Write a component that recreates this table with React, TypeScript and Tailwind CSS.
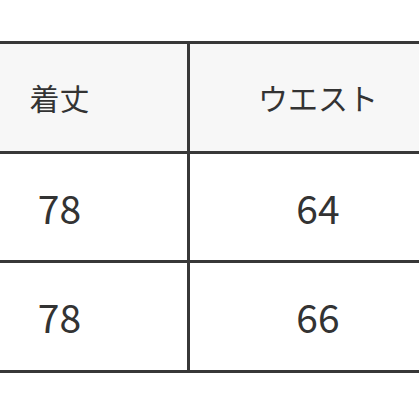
import React from "react";

const rows = [
  { length: "78", waist: "64" },
  { length: "78", waist: "66" },
];

const font = { fontFamily: '"Noto Sans CJK JP", "Noto Sans", sans-serif' };

export default function App() {
  return (
    <div className="w-[419px] h-[419px] overflow-hidden bg-white pt-[41px]" style={font}>
      {/* table is wider than the viewport, left edge cut off */}
      <div className="ml-[-68px] w-[514px] border-t-[3px] border-[#383838] text-[#333333]">
        {/* header */}
        <div className="flex h-[110px] border-b-[3px] border-[#383838] bg-[#f7f7f7]">
          <div className="w-[258px] border-r-[3px] border-[#383838] flex items-center justify-center text-[30px]">
            着丈
          </div>
          <div className="flex-1 flex items-center justify-center text-[30px]">ウエスト</div>
        </div>
        {rows.map((r, i) => (
          <div
            key={i}
            className={`flex border-b-[3px] border-[#383838] bg-white ${i === 0 ? "h-[109px]" : "h-[110px]"}`}
          >
            <div className="w-[258px] border-r-[3px] border-[#383838] flex items-center justify-center text-[39px]">
              {r.length}
            </div>
            <div className="flex-1 flex items-center justify-center text-[39px]">{r.waist}</div>
          </div>
        ))}
      </div>
    </div>
  );
}
